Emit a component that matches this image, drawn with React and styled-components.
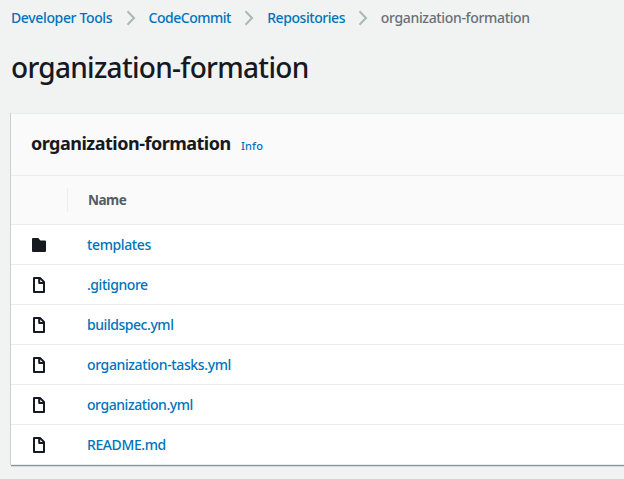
import React from 'react';
import styled, { createGlobalStyle } from 'styled-components';

const Global = createGlobalStyle`
  * { box-sizing: border-box; }
  body { margin: 0; background: #f2f3f3; overflow: hidden; font-family: "Noto Sans", "Open Sans", sans-serif; color: #16191f; }
`;
const Page = styled.main`
  width: 624px; height: 479px; overflow: hidden; background: #f1f3f3; padding-left: 11px;
`;
const Breadcrumbs = styled.nav`
  display: flex; align-items: center; height: 35px;
`;
const Label = styled.span`
  display: block; flex: none; width: ${p => p.$w}px; white-space: nowrap;
  font-size: 14px; line-height: 19px; font-weight: 500;
  letter-spacing: ${p => p.$ls}px; color: ${p => p.$muted ? '#687078' : '#0073bb'};
`;
const PanelTitle = styled.h2`
  margin: 0; width: 210px; font-size: 18px; line-height: 24px; font-weight: 700; letter-spacing: -0.5px; white-space: nowrap;
`;
const Info = styled.a`
  padding-top: 6px; font-size: 11px; line-height: 16px; font-weight: 500; letter-spacing: 0.15px; color: #0073bb;
`;
const ColumnName = styled.span`
  font-size: 13.5px; line-height: 19px; font-weight: 700; letter-spacing: -0.5px; color: #545b64; margin-top: 1px;
`;
const Chevron = styled.svg`
  flex: none; width: 10px; height: 16px; margin: 1px 13px 0 12.6px; fill: none; stroke: #aab7b8; stroke-width: 2;
`;
const Title = styled.h1`
  margin: 0; height: 78px; padding-top: 13px; font-size: 28px; line-height: 38px; font-weight: 500; letter-spacing: -0.7px; white-space: nowrap;
`;
const Panel = styled.section`
  width: 640px; height: 352px; background: #fff; border-top: 1px solid #eaeded;
  box-shadow: -1px 0 0 #cccfd0, 0 1px 0 #879596, 0 2px 0 #d5dbdb;
`;
const PanelHeader = styled.header`
  display: flex; align-items: center; height: 61px; padding: 0 0 3px 20px; background: #fafafa;
`;
const Columns = styled.div`
  display: flex; align-items: center; height: 50px; background: #fafafa;
  border-top: 1px solid #eaeded; border-bottom: 1px solid #eaeded;
`;
const IconColumn = styled.div`
  width: 57px; height: 24px; border-right: 1px solid #eaeded; margin-right: 20px;
`;
const Row = styled.div`
  display: flex; align-items: center; height: 40px; padding-left: 20px; border-bottom: 1px solid #eaeded;
`;
const FileIcon = styled.svg`
  flex: none; width: 16px; height: 16px; margin: 1px 40px 0 0; fill: none; stroke: #16191f; stroke-width: 2; stroke-linejoin: round;
`;
const crumbs = [['Developer Tools', 102, -0.36], ['CodeCommit', 83, -0.5], ['Repositories', 78, -0.44]];
const files = [
  ['templates', 64, -0.38], ['.gitignore', 61, -0.44], ['buildspec.yml', 87, -0.45],
  ['organization-tasks.yml', 144, -0.38], ['organization.yml', 107, -0.44], ['README.md', 79, -0.4],
];

export default function App() {
  return <><Global /><Page>
    <Breadcrumbs>
      {crumbs.map(([t, w, ls]) => <React.Fragment key={t}><Label $w={w} $ls={ls}>{t}</Label><Chevron viewBox="0 0 10 16"><path d="M1.5 1.2l6.5 6.8-6.5 6.8" /></Chevron></React.Fragment>)}
      <Label $w={150} $ls={-0.34} $muted>organization-formation</Label>
    </Breadcrumbs>
    <Title>organization-formation</Title>
    <Panel>
      <PanelHeader><PanelTitle>organization-formation</PanelTitle><Info>Info</Info></PanelHeader>
      <Columns><IconColumn /><ColumnName>Name</ColumnName></Columns>
      {files.map(([t, w, ls], i) => <Row key={t}>
        <FileIcon viewBox="0 0 16 16">{i === 0
          ? <path d="M2 2h5l2 2.5h5V14H2z" fill="#16191f" />
          : <><path d="M3 1h6l4 4v10H3z" /><path d="M8.2 1.5V6H13" strokeWidth="2" /></>}</FileIcon>
        <Label $w={w} $ls={ls}>{t}</Label>
      </Row>)}
    </Panel>
  </Page></>;
}
